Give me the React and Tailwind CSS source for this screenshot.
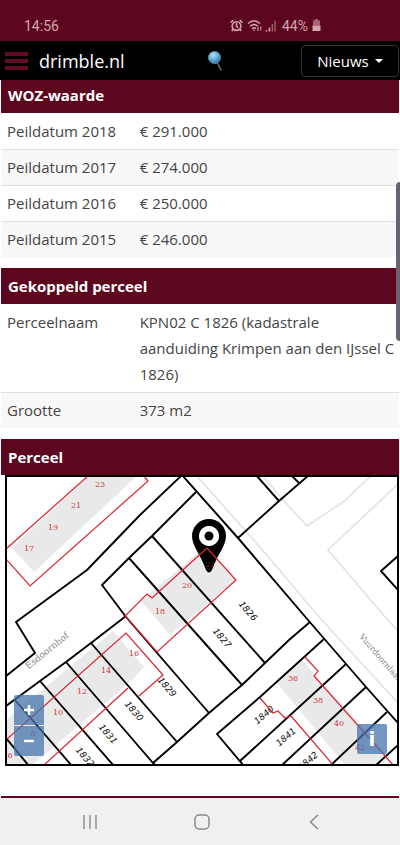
import { AlarmClock } from 'lucide-react';

const wozRows = [
  ['Peildatum 2018', '€ 291.000'],
  ['Peildatum 2017', '€ 274.000'],
  ['Peildatum 2016', '€ 250.000'],
  ['Peildatum 2015', '€ 246.000'],
];

const parcelRows = [
  ['Perceelnaam', 'KPN02 C 1826 (kadastrale aanduiding Krimpen aan den IJssel C 1826)'],
  ['Grootte', '373 m2'],
];

// map geometry
const buildings = [
  '89,475 138,475 34,572 12,548',
  '141,601 200,551 208,548 235,580 170,635',
  '6,720 113,631 144,667 128,684 83,722 32,765 6,765',
  '277,683 302,660 390,757 382,765 345,765',
];

const roads = [
  '262,475 285,502 307,526 343,502 372,475',
  '398,484 328,550 386,618 398,631',
  '196,475 265,553 320,618 398,703',
];

const plots = [
  '6,676 35,653 16,622 87,570 140,515 182,475',
  '182,475 238,538 308,620 366,687 398,723',
  '196,492 152,536 129,558 102,585 126,617 209,713',
  '126,616 91,643 66,662 40,681 6,706',
  '129,558 242,685',
  '152,536 265,663',
  '310,622 289,640 265,663 242,685 230,695 209,713 177,742 153,763',
  '91,643 177,742',
  '66,662 153,763 156,766',
  '40,681 114,766',
  '15,700 72,766',
  '6,738 29,766',
  '324,639 260,697 217,734 244,766',
  '346,664 240,761',
  '366,687 281,766',
  '387,712 330,766',
  '398,745 375,766',
  '238,538 279,501 309,475',
  '291,475 299,483',
  '256,475 279,501',
  '398,556 381,571 398,590',
];

const outlines = [
  '6,549 89,475',
  '6,559 30,586 148,481 143,475',
  '207,548 236,580 157,652 125,616 147,594 152,598 207,548',
  '7,739 126,633 163,675 139,696',
  '128,688 43,766',
  '305,657 318,671 314,676 394,766',
  '260,698 273,713 278,711 285,718 291,716 334,766',
];

const houseNumbers = [
  [23, 100, 487],
  [21, 76, 508],
  [19, 53, 530],
  [17, 29, 551],
  [22, 210, 567],
  [20, 187, 588],
  [18, 160, 614],
  [16, 134, 656],
  [14, 106, 673],
  [12, 82, 694],
  [10, 58, 715],
  [8, 33, 736],
  [6, 10, 758],
  [36, 293, 681],
  [38, 318, 703],
  [40, 339, 726],
  [42, 360, 750],
];

const plotNumbers = [
  [1826, 248, 611, 50],
  [1827, 222, 638, 50],
  [1829, 167, 687, 50],
  [1830, 134, 711, 50],
  [1831, 108, 734, 50],
  [1832, 85, 757, 50],
  [1840, 264, 715, -40],
  [1841, 286, 737, -40],
  [1842, 308, 761, -40],
];

function StatusBar() {
  return (
    <div className="flex h-[41px] items-center bg-[#5c071e] pt-[10px] pl-6 pr-[79px] font-['Roboto',sans-serif] text-sm text-[#d3a5b0]">
      <span>14:56</span>
      <div className="ml-auto flex items-center gap-1">
        <AlarmClock size={13} strokeWidth={3} />
        <svg width="31" height="14" viewBox="0 0 31 14" fill="none" stroke="currentColor" strokeWidth="1.4">
          <path d="M1 4.5 Q7 -1 13 4.5 M3 7.2 Q7 3.6 11 7.2 M5 9.7 Q7 8 9 9.7" />
          <path d="M7 12.2 L5.6 10.8 H8.4 Z" fill="currentColor" stroke="none" />
          <path d="M11 8 v4 M13.8 7.5 v4" strokeWidth="1.1" />
          <path d="M19.5 11 v1.5 M22.5 8.5 v4" strokeWidth="1.6" />
          <path d="M25.3 5 v7.5 M28 1.5 v11" opacity=".6" strokeWidth="1.3" />
        </svg>
        <span>44%</span>
        <svg width="9" height="13" viewBox="0 0 9 13" fill="currentColor">
          <path d="M3 0h3v1.5h-3z M1 1.5h7v5h-7z" opacity=".6" />
          <path d="M.5 6.5h8v5.5h-8z" />
        </svg>
      </div>
    </div>
  );
}

function NavBar() {
  return (
    <header className="flex h-[39px] items-center justify-between bg-black pr-px pl-[5px] text-white">
      <div className="flex flex-1 items-center gap-[11px]">
        <button aria-label="Menu" className="flex w-[23px] flex-col gap-[3px]">
          <span className="h-1 w-full bg-[#650c25]" />
          <span className="h-1 w-full bg-[#650c25]" />
          <span className="h-1 w-full bg-[#650c25]" />
        </button>
        <a href="#" className="text-lg leading-6">drimble.nl</a>
      </div>
      <button aria-label="Zoeken" className="mr-[76px]">
        <svg width="18" height="22" viewBox="0 0 18 22">
          <defs>
            <radialGradient id="lens" cx="40%" cy="30%" r="70%">
              <stop offset="0" stopColor="#b9e2f6" />
              <stop offset=".5" stopColor="#69b4e0" />
              <stop offset="1" stopColor="#2f79ac" />
            </radialGradient>
          </defs>
          <path d="M10.5 13 L14 20" stroke="#5e6770" strokeWidth="1.6" strokeLinecap="round" />
          <circle cx="7.5" cy="7.5" r="6" fill="url(#lens)" stroke="#77a5bd" strokeWidth=".8" />
        </svg>
      </button>
      <button className="flex h-8 w-[98px] items-center justify-center gap-[6px] rounded-sm border border-[#333] text-[15px]">
        Nieuws
        <svg width="8" height="4" viewBox="0 0 8 4" fill="currentColor">
          <path d="M0 0h8l-4 4z" />
        </svg>
      </button>
    </header>
  );
}

function DataTable({ title, rows, first }) {
  return (
    <table className="w-full table-fixed border-collapse text-left">
      <colgroup>
        <col className="w-1/3" />
        <col />
      </colgroup>
      <thead>
        <tr className="bg-[#5c071e] text-white">
          <th colSpan={2} className={`px-[7px] font-bold ${first ? 'pt-[2px] pb-[5px]' : 'py-[5px]'}`}>
            {title}
          </th>
        </tr>
      </thead>
      <tbody>
        {rows.map(([label, value], i) => (
          <tr
            key={label}
            className={`align-top ${i % 2 ? 'bg-[#f8f8f8]' : 'bg-white'} ${i ? 'shadow-[inset_0_1px_0_#dfdfdf]' : ''}`}
          >
            <th scope="row" className="px-[6px] py-[5px] font-normal">{label}</th>
            <td className="py-[5px] pl-[6px]">{value}</td>
          </tr>
        ))}
      </tbody>
    </table>
  );
}

function ParcelMap() {
  return (
    <div className="relative mr-px ml-[5px] border-2 border-black bg-white">
      <svg viewBox="7 477 390 287" className="block h-auto w-full" role="img" aria-label="Perceelkaart">
        <g fill="#e9e9e9">
          {buildings.map((p) => <polygon key={p} points={p} />)}
        </g>
        <g fill="none" stroke="#e2e2e2" strokeWidth="1.6">
          {roads.map((p) => <polyline key={p} points={p} />)}
        </g>
        <g fontFamily="DejaVu Serif, serif" fill="#858585" textAnchor="middle">
          <text transform="translate(49 653) rotate(-39)" fontSize="9">Esdoornhof</text>
          <text transform="translate(359 637) rotate(49)" fontSize="8" textAnchor="start">Vuurdoornlaan</text>
        </g>
        <g fill="none" stroke="#000" strokeWidth="1.9" strokeLinejoin="round">
          {plots.map((p) => <polyline key={p} points={p} />)}
        </g>
        <g fontFamily="DejaVu Sans, sans-serif" fontStyle="italic" fontSize="9" fill="#111" textAnchor="middle">
          {plotNumbers.map(([n, x, y, r]) => (
            <text key={n} transform={`translate(${x} ${y}) rotate(${r})`} dy="3">{n}</text>
          ))}
        </g>
        <path
          fillRule="evenodd"
          d="M209 519a17 17 0 0 1 17 17c0 10-9 19-14 34q-3 5-6 0c-5-15-14-24-14-34a17 17 0 0 1 17-17z M209 526a10 10 0 1 0 0 20a10 10 0 1 0 0-20z"
        />
        <circle cx="209" cy="536" r="10" fill="#fff" />
        <circle cx="209" cy="536" r="4.5" />
        <g fill="none" stroke="#d9232f" strokeWidth="1.2">
          {outlines.map((p) => <polyline key={p} points={p} />)}
        </g>
        <g fontFamily="DejaVu Serif, serif" fontSize="8" fill="#d03a3a" textAnchor="middle">
          {houseNumbers.map(([n, x, y]) => (
            <text key={n} x={x} y={y} opacity={n === 22 ? 0.6 : 1}>{n}</text>
          ))}
        </g>
      </svg>
      <div className="absolute bottom-2 left-[7px] flex flex-col gap-px text-white">
        <button aria-label="Inzoomen" className="flex size-[30px] items-center justify-center rounded-t-xs bg-[#4674ad]/75">
          <svg width="12" height="12" viewBox="0 0 12 12" stroke="currentColor" strokeWidth="2.4">
            <path d="M6 1v10M1 6h10" />
          </svg>
        </button>
        <button aria-label="Uitzoomen" className="flex size-[30px] items-center justify-center rounded-b-xs bg-[#4674ad]/75">
          <svg width="12" height="12" viewBox="0 0 12 12" stroke="currentColor" strokeWidth="2.4">
            <path d="M1 6h10" />
          </svg>
        </button>
      </div>
      <button
        aria-label="Informatie"
        className="absolute right-[10px] bottom-[10px] flex size-[30px] items-center justify-center rounded-xs bg-[#4674ad]/75 font-['DejaVu_Sans',sans-serif] text-xl font-bold text-white"
      >
        i
      </button>
    </div>
  );
}

function SystemNav() {
  return (
    <nav className="flex h-[47px] items-center justify-between bg-[#f0f0f0] pr-[78px] pl-[82px] text-[#8a8a8a]">
      <button aria-label="Recente apps">
        <svg width="16" height="16" viewBox="0 0 16 16" stroke="currentColor" strokeWidth="1.4">
          <path d="M2 1v14M8 1v14M14 1v14" />
        </svg>
      </button>
      <button aria-label="Startscherm">
        <svg width="16" height="16" viewBox="0 0 16 16" fill="none" stroke="currentColor" strokeWidth="1.5">
          <rect x="1" y="1" width="14" height="14" rx="4" />
        </svg>
      </button>
      <button aria-label="Terug">
        <svg width="16" height="16" viewBox="0 0 16 16" fill="none" stroke="currentColor" strokeWidth="1.5">
          <path d="M12 1l-7.5 7l7.5 7" />
        </svg>
      </button>
    </nav>
  );
}

export default function App() {
  return (
    <div className="relative min-h-screen bg-white font-['Open_Sans',sans-serif] text-[15px] leading-[26px] text-[#444]">
      <StatusBar />
      <NavBar />
      <main>
        <div className="mx-px flex flex-col gap-[11px]">
          <DataTable title="WOZ-waarde" rows={wozRows} first />
          <DataTable title="Gekoppeld perceel" rows={parcelRows} />
          <h2 className="bg-[#5c071e] px-[7px] py-[5px] font-bold text-white">Perceel</h2>
        </div>
        <ParcelMap />
        <div className="mx-px mt-[30px] h-[2px] bg-[#5c071e]" />
      </main>
      <SystemNav />
      <div className="absolute top-[182px] right-0 h-[159px] w-1 rounded-l-sm bg-[#696370]" />
    </div>
  );
}
